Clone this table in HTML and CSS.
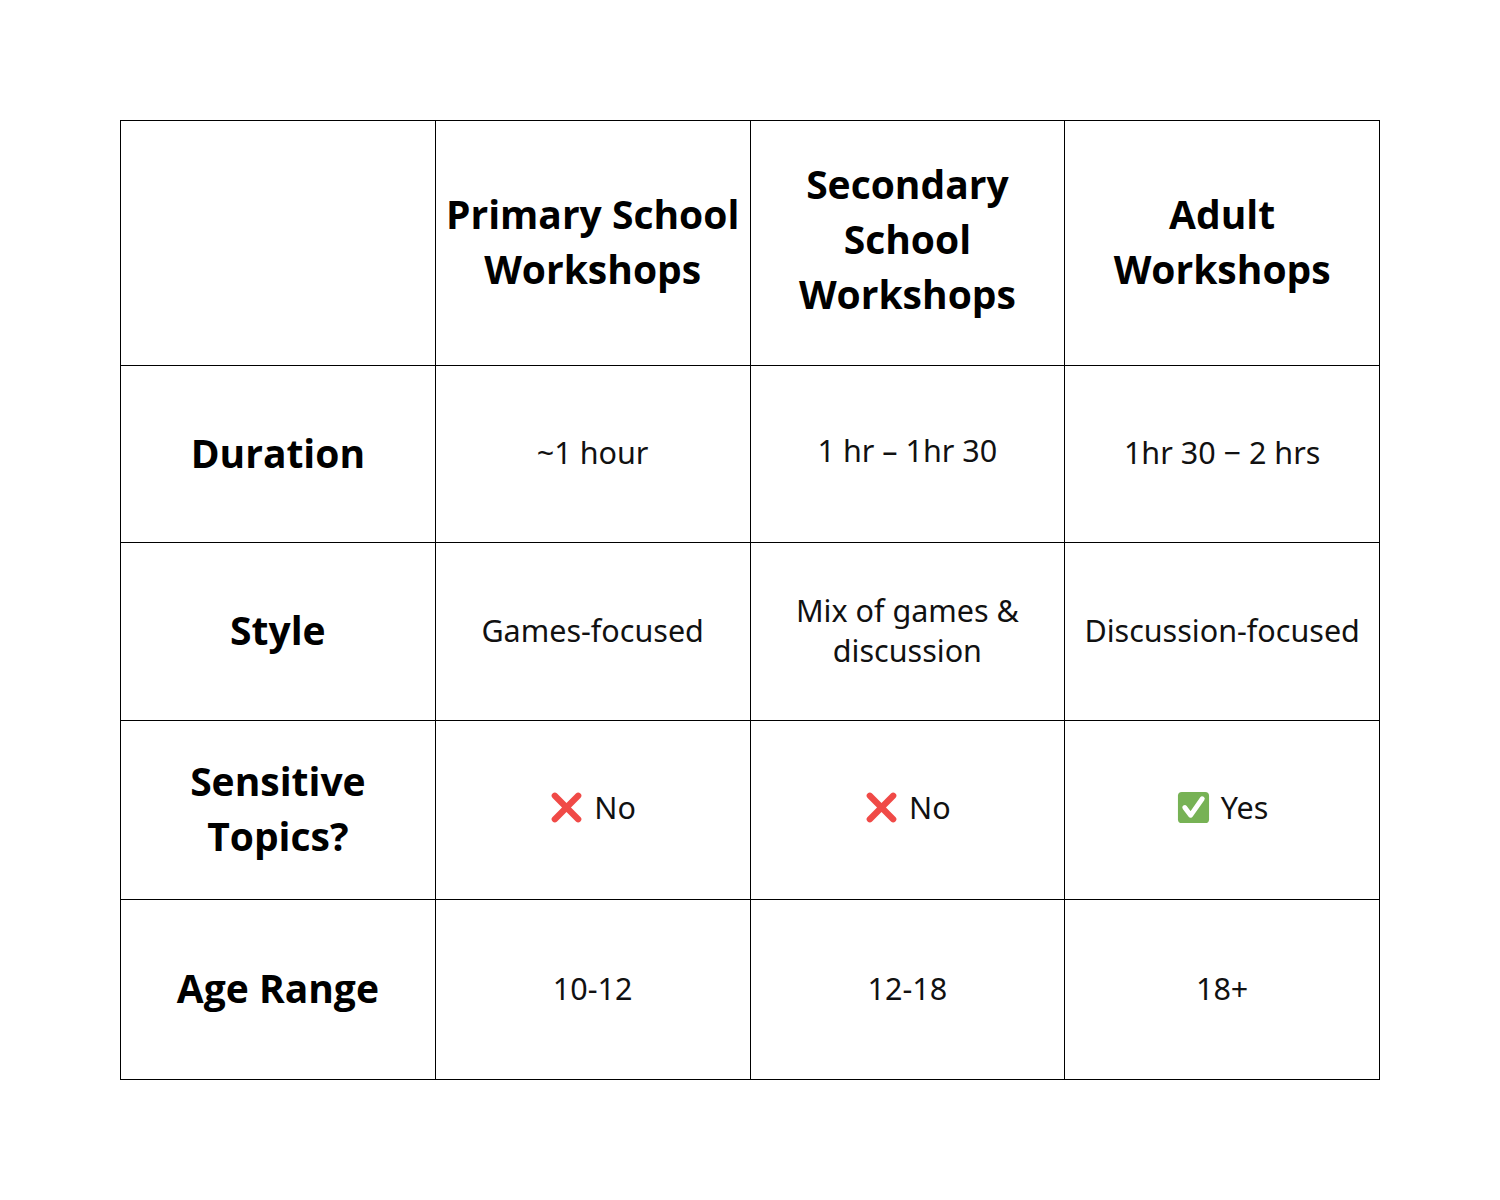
FILE: index.html
```html
<!DOCTYPE html>
<html>
<head>
<meta charset="utf-8">
<link rel="stylesheet" href="styles.css">
</head>
<body>
<table class="grid">
  <tr class="r-head">
    <th class="corner"></th>
    <th>Primary School<br>Workshops</th>
    <th class="up3">Secondary<br>School<br>Workshops</th>
    <th>Adult<br>Workshops</th>
  </tr>
  <tr class="r1">
    <th>Duration</th>
    <td>~1 hour</td>
    <td><span class="up">1 hr – 1hr 30</span></td>
    <td>1hr 30 − 2 hrs</td>
  </tr>
  <tr class="r2">
    <th>Style</th>
    <td>Games-focused</td>
    <td>Mix of games &amp;<br>discussion</td>
    <td>Discussion-focused</td>
  </tr>
  <tr class="r3">
    <th>Sensitive<br>Topics?</th>
    <td><span class="mark"><svg class="emo" viewBox="0 0 36 36"><path d="M6 6 L30 30 M30 6 L6 30" stroke="#f04a47" stroke-width="6.5" stroke-linecap="round"/></svg>No</span></td>
    <td><span class="mark"><svg class="emo" viewBox="0 0 36 36"><path d="M6 6 L30 30 M30 6 L6 30" stroke="#f04a47" stroke-width="6.5" stroke-linecap="round"/></svg>No</span></td>
    <td><span class="mark"><svg class="emo" viewBox="0 0 36 36"><rect x="2" y="2" width="32" height="32" rx="4" fill="#77b255"/><path d="M9 18 L15 26 L27 9" stroke="#fff" stroke-width="5" fill="none" stroke-linecap="round" stroke-linejoin="round"/></svg>Yes</span></td>
  </tr>
  <tr class="r4">
    <th>Age Range</th>
    <td>10-12</td>
    <td>12-18</td>
    <td>18+</td>
  </tr>
</table>
</body>
</html>
```
FILE: styles.css
```css
html, body {
  margin: 0;
  background: #ffffff;
}
body {
  padding: 120px 0 0 120px;
}
.grid {
  border-collapse: collapse;
  width: 1260px;
  table-layout: fixed;
  border: 1.5px solid #000;
}
.grid th, .grid td {
  border: 1.5px solid #000;
  text-align: center;
  vertical-align: middle;
  padding: 0 4px 4px;
  color: #000;
}
.grid th {
  font-family: "Open Sans", "Noto Sans", sans-serif;
  font-weight: 700;
  font-size: 39px;
  line-height: 55px;
}
.grid td {
  font-family: "Noto Sans", "Open Sans", sans-serif;
  font-weight: 400;
  font-size: 30.5px;
  line-height: 40px;
  color: #111;
}
.r-head { height: 245px; }
.r1 { height: 177px; }
.r2 { height: 178px; }
.r3 { height: 179px; }
.r4 { height: 180px; }
.up { position: relative; top: -2px; }
.grid th.up3 { padding-bottom: 10px; }
.mark {
  display: inline-flex;
  align-items: center;
  gap: 10px;
  position: relative;
  top: 2px;
}
.emo {
  width: 35px;
  height: 35px;
}
```
